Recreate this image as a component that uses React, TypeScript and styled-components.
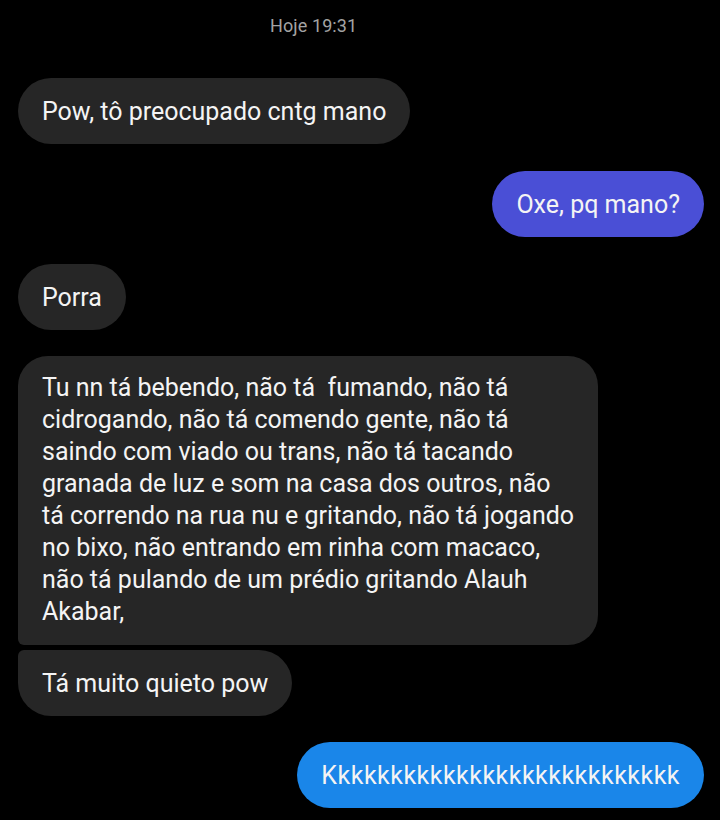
import * as React from 'react';
import styled, { createGlobalStyle } from 'styled-components';

const GlobalStyle = createGlobalStyle`
    html, body {
        margin: 0;
        padding: 0;
        background: #000;
    }
    body {
        font-family: Roboto, "Noto Sans", "Liberation Sans", sans-serif;
        -webkit-font-smoothing: antialiased;
    }
`;

const Screen = styled.div`
    width: 720px;
    height: 820px;
    background: #000;
    display: flex;
    flex-direction: column;
    padding: 0 16px 0 18px;
    box-sizing: border-box;
    overflow: hidden;
`;

const DateLabel = styled.div`
    padding: 15px 0 0 252px;
    height: 78px;
    box-sizing: border-box;
    font-size: 18px;
    color: #a3a3a3;
    letter-spacing: 0.1px;
`;

const Row = styled.div<{ $mine?: boolean; $gap: number }>`
    display: flex;
    justify-content: ${(p) => (p.$mine ? 'flex-end' : 'flex-start')};
    margin-bottom: ${(p) => p.$gap}px;
`;

type Corner = 'top' | 'bottom' | 'none';

const Bubble = styled.div<{ $color: string; $joined?: Corner; $spacing?: number }>`
    background: ${(p) => p.$color};
    color: #f4f4f4;
    font-size: 25px;
    line-height: 32px;
    letter-spacing: ${(p) => p.$spacing || 0}px;
    padding: 18px 24px 16px;
    min-height: 66px;
    box-sizing: border-box;
    border-radius: 33px;
    border-bottom-left-radius: ${(p) => (p.$joined === 'bottom' ? '6px' : '33px')};
    border-top-left-radius: ${(p) => (p.$joined === 'top' ? '6px' : '33px')};
    white-space: pre;
`;

const LongBubble = styled(Bubble)`
    padding: 16px 24px 17px;
    border-radius: 30px;
    border-bottom-left-radius: 6px;
`;

const GREY = '#262626';

const longText = [
    'Tu nn tá bebendo, não tá  fumando, não tá',
    'cidrogando, não tá comendo gente, não tá',
    'saindo com viado ou trans, não tá tacando',
    'granada de luz e som na casa dos outros, não',
    'tá correndo na rua nu e gritando, não tá jogando',
    'no bixo, não entrando em rinha com macaco,',
    'não tá pulando de um prédio gritando Alauh',
    'Akabar,',
];

/**
 * Chat thread.
 */
export default function App() {
    return (
        <React.Fragment>
            <GlobalStyle />
            <Screen>
                <DateLabel>Hoje 19:31</DateLabel>
                <Row $gap={27}>
                    <Bubble $color={GREY}>Pow, tô preocupado cntg mano</Bubble>
                </Row>
                <Row $mine={true} $gap={27}>
                    <Bubble $color="#4a4fd6">Oxe, pq mano?</Bubble>
                </Row>
                <Row $gap={26}>
                    <Bubble $color={GREY}>Porra</Bubble>
                </Row>
                <Row $gap={5}>
                    <LongBubble $color={GREY}>{longText.join('\n')}</LongBubble>
                </Row>
                <Row $gap={26}>
                    <Bubble $color={GREY} $joined="top">Tá muito quieto pow</Bubble>
                </Row>
                <Row $mine={true} $gap={0}>
                    <Bubble $color="#1a86e9" $spacing={0.5}>Kkkkkkkkkkkkkkkkkkkkkkkkkkk</Bubble>
                </Row>
            </Screen>
        </React.Fragment>
    );
}
